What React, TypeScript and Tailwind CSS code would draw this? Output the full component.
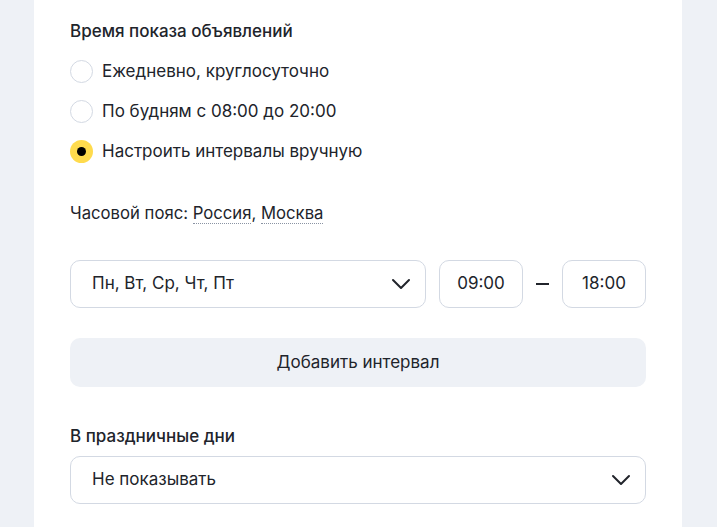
import { useState } from 'react'

const options = [
    'Ежедневно, круглосуточно',
    'По будням с 08:00 до 20:00',
    'Настроить интервалы вручную',
]

function Chevron() {
    return (
        <svg width="20" height="12" viewBox="0 0 20 12" fill="none">
            <path d="M2 2l8 8 8-8" stroke="#21242b" strokeWidth="2" strokeLinecap="round" strokeLinejoin="round" />
        </svg>
    )
}

function Radio({ checked }: { checked: boolean }) {
    if (checked) {
        return (
            <span className="flex h-[23px] w-[23px] items-center justify-center rounded-full bg-[#ffdb4d]">
                <span className="h-[9px] w-[9px] rounded-full bg-black" />
            </span>
        )
    }
    return <span className="h-[23px] w-[23px] rounded-full border border-[#d3d9e3] bg-white" />
}

export default function App() {
    const [selected, setSelected] = useState(2)

    return (
        <div className="min-h-[527px] bg-[#eef1f6] font-['Inter',sans-serif] text-[17px] text-[#21242b]">
            <div className="ml-[34px] min-h-[527px] w-[648px] bg-white px-[36px] pt-[19px]">
                <h2 className="text-[17px] leading-6 font-medium">Время показа объявлений</h2>

                {/* Radio group */}
                <div className="mt-4 flex flex-col gap-4">
                    {options.map((o, i) => (
                        <label key={o} className="flex h-6 cursor-pointer items-center gap-[9px]" onClick={() => setSelected(i)}>
                            <Radio checked={selected === i} />
                            <span className="leading-6">{o}</span>
                        </label>
                    ))}
                </div>

                <p className="mt-[38px] text-[16.7px] leading-6">
                    Часовой пояс:{' '}
                    <span className="border-b border-dotted border-[#8a93a3]">Россия</span>,{' '}
                    <span className="border-b border-dotted border-[#8a93a3]">Москва</span>
                </p>

                {/* Interval row */}
                <div className="mt-[35px] flex items-center">
                    <div className="flex h-[48px] w-[356px] items-center justify-between rounded-[10px] border border-[#d3d9e3] pr-[14px] pl-[21px]">
                        <span>Пн, Вт, Ср, Чт, Пт</span>
                        <Chevron />
                    </div>
                    <div className="ml-[13px] flex h-[48px] w-[84px] items-center justify-center rounded-[10px] border border-[#d3d9e3]">
                        09:00
                    </div>
                    <span className="mx-[13px] h-[2px] w-[13px] bg-[#21242b]" />
                    <div className="flex h-[48px] w-[84px] items-center justify-center rounded-[10px] border border-[#d3d9e3]">
                        18:00
                    </div>
                </div>

                <button className="mt-[30px] flex h-[49px] w-full items-center justify-center rounded-[10px] bg-[#eef1f6]">
                    Добавить интервал
                </button>

                <h3 className="mt-[37px] leading-6 font-medium">В праздничные дни</h3>
                <div className="mt-2 flex h-[48px] w-full items-center justify-between rounded-[10px] border border-[#d3d9e3] pr-[14px] pl-[21px]">
                    <span>Не показывать</span>
                    <Chevron />
                </div>
            </div>
        </div>
    )
}
